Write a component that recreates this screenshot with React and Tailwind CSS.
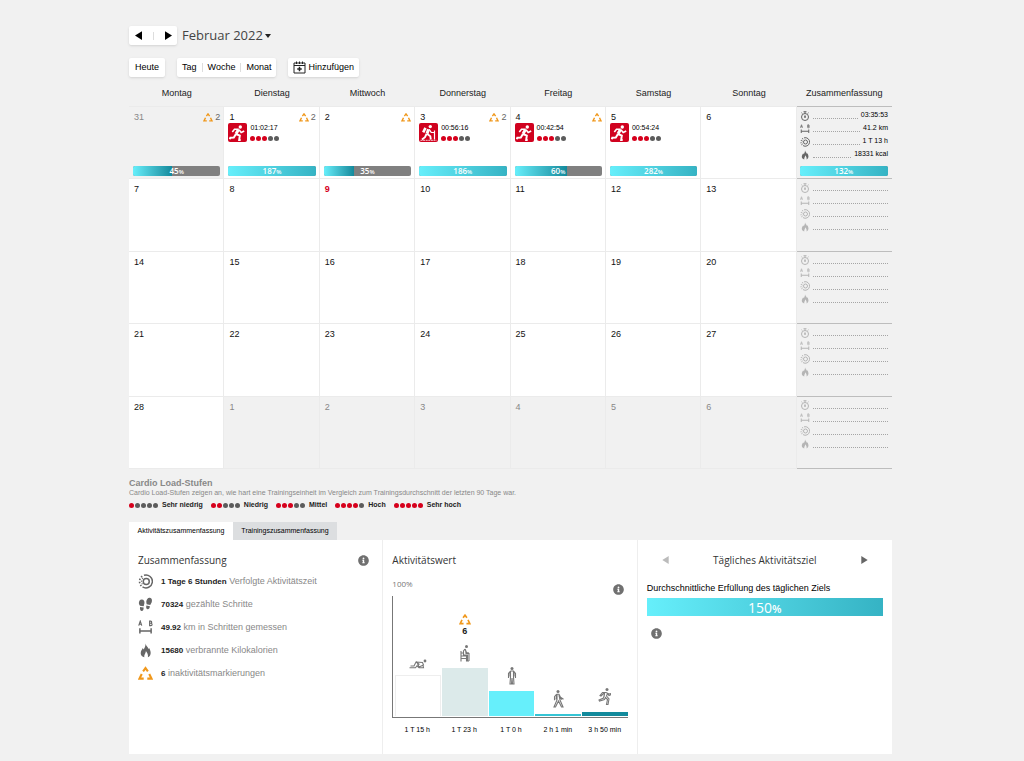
import { useState } from 'react';
import { FaInfoCircle } from 'react-icons/fa';

const weekdays = ['Montag', 'Dienstag', 'Mittwoch', 'Donnerstag', 'Freitag', 'Samstag', 'Sonntag'];

const firstWeek = [
    { day: 31, outside: true, marks: '2', percent: 45 },
    { day: 1, marks: '2', percent: 187, sport: 'run', time: '01:02:17' },
    { day: 2, marks: '', percent: 35 },
    { day: 3, marks: '2', percent: 186, sport: 'hike', time: '00:56:16' },
    { day: 4, marks: '', percent: 60, sport: 'run', time: '00:42:54' },
    { day: 5, percent: 282, sport: 'run', time: '00:54:24' },
    { day: 6 },
];

const makeWeek = (start) =>
    weekdays.map((_, i) => {
        const day = start + i;
        return day > 28 ? { day: day - 28, outside: true } : { day, today: day === 9 };
    });

const weeks = [firstWeek, makeWeek(7), makeWeek(14), makeWeek(21), makeWeek(28)];

const loadLevels = ['Sehr niedrig', 'Niedrig', 'Mittel', 'Hoch', 'Sehr hoch'];

const MarkIcon = ({ className }) => (
    <svg viewBox="0 0 20 18" className={className} fill="none" stroke="#f0981c" strokeWidth="2.8" aria-hidden="true">
        <path d="M6.8 6.2 10 1.8l3.2 4.4" />
        <path d="M5 9.6 2 15.8h5.6" />
        <path d="m15 9.6 3 6.2h-5.6" />
    </svg>
);

const StopwatchIcon = ({ className }) => (
    <svg viewBox="0 0 20 20" className={className} fill="none" stroke="currentColor" strokeWidth="2" aria-hidden="true">
        <circle cx="10" cy="12" r="7" />
        <path d="M10 1v4M7 1.5h6M15.2 5.2l1.8-1.7M3 3.5l1.8 1.7M10 8.5V12" />
        <circle cx="10" cy="12" r="1" fill="currentColor" />
    </svg>
);

const DistanceIcon = ({ className }) => (
    <svg viewBox="0 0 20 20" className={className} fill="none" stroke="currentColor" strokeWidth="1.5" aria-hidden="true">
        <path d="m1 7.5 2-6 2 6M1.7 5.6h2.6" />
        <path d="M15.5 1.5v6h1.7a1.6 1.6 0 0 0 0-3.2h-1.7 1.4a1.4 1.4 0 0 0 0-2.8z" />
        <path d="M2.5 11v7M17.5 11v7M2.5 14.5h15" strokeWidth="2" />
    </svg>
);

const ActivityIcon = ({ className }) => (
    <svg viewBox="0 0 20 20" className={className} fill="none" stroke="currentColor" aria-hidden="true">
        <circle cx="11" cy="10" r="4" strokeWidth="2" />
        <path d="M8 1.7a8.6 8.6 0 1 1-2 15.5" strokeWidth="2" />
        <path d="M4.5 16A8.6 8.6 0 0 1 6.5 2.5" strokeWidth="2.2" strokeDasharray="2 2.2" />
        <path d="M5.8 13.6a6.2 6.2 0 0 1 1-8.3" strokeWidth="1.4" strokeDasharray="1.5 2" />
    </svg>
);

const FlameIcon = ({ className }) => (
    <svg viewBox="0 0 20 20" className={className} fill="currentColor" aria-hidden="true">
        <path d="M10 .5c.3 3 3.300 4.500 4 7.500l.8-1.5c1.6 2.7 2.4 5.2 2 7.7-.4 2.3-1.600 3.900-3.600 4.800.6-3-.6-6-2.700-8.500.1 3-2.700 4.500-2 8.500C5.800 18.200 3.600 16.500 3.600 13.500c0-3 2-4.500 2.700-6.800l1.200 2C8.800 6.300 10.200 4 10 .5z" />
    </svg>
);

const StepsIcon = ({ className }) => (
    <svg viewBox="0 0 20 20" className={className} fill="currentColor" aria-hidden="true">
        <path d="M1.3 9.2C.6 6 2.4 3.2 5 3.2c2.900 0 4 2.500 3.500 5.200L7.600 12.400l-5-.6z" />
        <path d="m2.7 13.400 4.800.6c.1 2.600-.6 4.800-2.500 4.800-2 0-2.700-2.600-2.300-5.400z" />
        <path d="M11 6.200c.3-3.200 2.400-5.700 4.900-5.200 2.500.4 3.300 3.200 2.400 6l-2 3.700-4.800-1z" />
        <path d="m11.200 11.200 4.700 1c-.3 2.600-1.500 4.400-3.300 4.100-1.800-.4-2-2.700-1.400-5.100z" />
    </svg>
);

const RunSportIcon = () => (
    <svg viewBox="0 0 19 19" className="size-full" fill="none" stroke="#fff" strokeWidth="1.6" aria-hidden="true">
        <circle cx="12.3" cy="4" r="1.7" fill="#fff" stroke="none" />
        <path d="M10.3 6.800 8 11" strokeWidth="3" />
        <path d="M10.800 6.300 6.500 6.200 4.300 9M11 6.800l2.200 2.700 3-1.500" />
        <path d="m8 11 3.800 1.700-.6 4.200h1.500M7.800 11.200l-2 3.300-3.500.2-.5 1.500" strokeWidth="2" />
    </svg>
);

const HikeSportIcon = () => (
    <svg viewBox="0 0 19 19" className="size-full" fill="none" stroke="#fff" strokeWidth="1.5" aria-hidden="true">
        <circle cx="11.3" cy="3.6" r="1.7" fill="#fff" stroke="none" />
        <path d="M9.500 6.300 8 10.800" strokeWidth="3" />
        <path d="M6.500 4.800 4.200 9.300" strokeWidth="2.6" />
        <path d="m10.200 6.300 2 3 2.800.2M15.500 7.500v9" strokeWidth="1.2" />
        <path d="m8 10.800 3.300 2.400.5 3.300M7.500 11l-1.500 3.200-3 2.300" strokeWidth="1.9" />
        <path d="M1.500 17.300h16" strokeWidth=".8" strokeDasharray="2 .6" />
    </svg>
);

const CalendarPlusIcon = () => (
    <svg viewBox="0 0 26 26" className="size-[13px]" fill="none" stroke="#222" strokeWidth="2" aria-hidden="true">
        <path d="M2 4h22v20H2zM2 9h22" />
        <path d="M7 1v5M13 1v5M19 1v5" />
        <path d="M13 11.500v9M8.500 16h9" strokeWidth="3" />
    </svg>
);

const LyingIcon = () => (
    <svg viewBox="0 0 36 20" className="h-[10px] w-[18px]" fill="none" stroke="#777" strokeWidth="2.2" aria-hidden="true">
        <circle cx="32" cy="4" r="2.8" fill="#777" stroke="none" />
        <path d="M1 17.500h12l3-4 4 4h9l-1-5M3 14h7l4-8 13 1 2 5-9 4-3-7M14 6l7 5" />
    </svg>
);

const SittingIcon = () => (
    <svg viewBox="0 0 20 34" className="h-[17px] w-[10px]" fill="none" stroke="#777" strokeWidth="2.2" aria-hidden="true">
        <circle cx="13" cy="3" r="3" fill="#777" stroke="none" />
        <path d="m10 8-3 4v8h8v12h3M10 8l3 7 5 1M11 9l1 8h6v15M2 12v21M2 22h11v11M2 27h11M2 16h4" />
    </svg>
);

const StandingIcon = () => (
    <svg viewBox="0 0 20 36" className="h-[18px] w-[10px]" fill="none" stroke="#777" strokeWidth="2.2" aria-hidden="true">
        <circle cx="10" cy="3" r="3" fill="#777" stroke="none" />
        <path d="M7 8h6l4 5v9M7 8l-4 5v9M7 9v11l-1 14h3l1-12 1 12h3l-1-14V9M6 11v8M14 11v8" />
    </svg>
);

const WalkingIcon = () => (
    <svg viewBox="0 0 22 36" className="h-[18px] w-[11px]" fill="none" stroke="#777" strokeWidth="2.2" aria-hidden="true">
        <circle cx="10" cy="3" r="3" fill="#777" stroke="none" />
        <path d="M7 8.500h5l3 6 6 4M7 8.500l-4 5v7M8 9v11L2 34h3l6-12 6 12h3l-6-14-2-10M7 11l-1 8M12 12l2 4 4 3" />
    </svg>
);

const RunningIcon = () => (
    <svg viewBox="0 0 26 36" className="h-[18px] w-[13px]" fill="none" stroke="#777" strokeWidth="2.2" aria-hidden="true">
        <circle cx="18" cy="3" r="3" fill="#777" stroke="none" />
        <path d="M16 9H9l-5 6 2 1 5-5h2l-2 9-9 4 1 2 10-3 2-4 4 4-2 10h3l2-11-5-6 2-5 3 4 5-2-1-2-4 1zM13 12l-1 6" />
    </svg>
);

const Dots = ({ level }) => (
    <span className="flex gap-px">
        {[1, 2, 3, 4, 5].map((n) => (
            <span key={n} className={`size-[5px] rounded-full ${n <= level ? 'bg-[#d6001c]' : 'bg-[#5c5c5c]'}`} />
        ))}
    </span>
);

const PercentBar = ({ value }) => (
    <div className="relative h-[10px] overflow-hidden rounded-[2px] bg-[#808080] text-center font-['Open_Sans',sans-serif] text-[8px] leading-[10px] font-semibold text-white">
        <div
            className={`absolute inset-y-0 left-0 bg-linear-to-r from-[#66effb] ${value < 100 ? 'to-[#128a9c]' : 'to-[#35b3c4]'}`}
            style={{ width: `${Math.min(value, 100)}%` }}
        />
        <span className="relative">
            {value}
            <span className="text-[6px]">%</span>
        </span>
    </div>
);

const DayCell = ({ data }) => (
    <td className={`border-r border-b border-[#ebebeb] p-0 align-top ${data.outside ? 'bg-[#f1f1f1]' : 'bg-white'}`}>
        <div className="flex h-[70px] flex-col pt-1 pr-[3px] pb-px pl-1">
            <div className="flex items-center justify-between pl-px text-[9px] leading-3">
                <span className={data.today ? 'font-bold text-[#d6001c]' : data.outside ? 'text-[#888]' : 'text-[#111]'}>
                    {data.day}
                </span>
                {data.marks !== undefined && (
                    <span className="flex items-center gap-0.5 text-[#666]">
                        <MarkIcon className="h-[9px] w-[10px]" />
                        {data.marks}
                    </span>
                )}
            </div>
            {data.sport && (
                <div className="flex gap-[3px]">
                    <span className="size-[19px] rounded-[2px] bg-[#d0021f]">
                        {data.sport === 'run' ? <RunSportIcon /> : <HikeSportIcon />}
                    </span>
                    <span className="flex flex-col gap-[3px] text-[7px] leading-[10px] text-black">
                        {data.time}
                        <Dots level={3} />
                    </span>
                </div>
            )}
            {data.percent && (
                <div className="mt-auto">
                    <PercentBar value={data.percent} />
                </div>
            )}
        </div>
    </td>
);

const summaryIcons = [StopwatchIcon, DistanceIcon, ActivityIcon, FlameIcon];

const SummaryCell = ({ values, percent }) => (
    <td className="border-b border-[#bdbdbd] p-0 align-top">
        <div className="flex h-[70px] flex-col pt-0.5 pr-1 pb-px pl-[3px]">
            {summaryIcons.map((Icon, i) => (
                <div key={i} className="flex h-[13px] items-center gap-[3px] text-[7px] text-black">
                    <Icon className={`size-[10px] shrink-0 ${values ? 'text-[#666]' : 'text-[#b5b5b5]'}`} />
                    <span className="mt-1.5 grow border-b border-dotted border-[#a5a5a5]" />
                    {values && <span>{values[i]}</span>}
                </div>
            ))}
            {percent && (
                <div className="mt-auto">
                    <PercentBar value={percent} />
                </div>
            )}
        </div>
    </td>
);

const Triangle = ({ left, className }) => (
    <svg viewBox="0 0 8 10" className={className} fill="currentColor" aria-hidden="true">
        <path d={left ? 'M8 0v10L0 5z' : 'M0 0v10l8-5z'} />
    </svg>
);

const InfoButton = () => (
    <button type="button" aria-label="Info" className="block text-[#707070]">
        <FaInfoCircle size={11} />
    </button>
);

const totals = [
    { icon: ActivityIcon, value: '1 Tage 6 Stunden', label: 'Verfolgte Aktivitätszeit' },
    { icon: StepsIcon, value: '70324', label: 'gezählte Schritte' },
    { icon: DistanceIcon, value: '49.92', label: 'km in Schritten gemessen' },
    { icon: FlameIcon, value: '15680', label: 'verbrannte Kilokalorien' },
    { icon: MarkIcon, value: '6', label: 'inaktivitätsmarkierungen' },
];

const chart = [
    { label: '1 T 15 h', height: 41, color: 'border border-b-0 border-[#eee] bg-white', icon: LyingIcon },
    { label: '1 T 23 h', height: 48, color: 'bg-[#dceaea]', icon: SittingIcon, marks: 6 },
    { label: '1 T 0 h', height: 25, color: 'bg-[#66effb]', icon: StandingIcon },
    { label: '2 h 1 min', height: 2, color: 'bg-[#35c4d4]', icon: WalkingIcon },
    { label: '3 h 50 min', height: 4, color: 'bg-[#128a9c]', icon: RunningIcon },
];

const panelTitle = "font-['Open_Sans',sans-serif] text-[10px] leading-4 text-[#333]";
const toolButton = 'flex h-[19px] items-center rounded-[2px] bg-white text-black shadow-sm';

const App = () => {
    const [tab, setTab] = useState('activity');

    const tabClass = (name) =>
        `h-[18px] w-[104px] text-center text-[7px] text-black ${tab === name ? 'bg-white' : 'bg-[#dcdee0]'}`;

    return (
        <div className="min-h-screen bg-[#f1f1f1] pt-[26px] pr-[3px] pb-[7px] font-['Liberation_Sans',Arial,sans-serif] text-[9px] text-[#222]">
            <main className="mx-auto max-w-[763px]">
                <div className="flex items-center gap-[5px]">
                    <div className="flex h-[19px] w-12 items-center justify-around rounded-[2px] bg-white shadow-sm">
                        <button type="button" aria-label="Vorheriger Monat">
                            <Triangle left className="h-[9px] w-[7px] text-black" />
                        </button>
                        <span className="h-2 w-px bg-[#ddd]" />
                        <button type="button" aria-label="Nächster Monat">
                            <Triangle className="h-[9px] w-[7px] text-black" />
                        </button>
                    </div>
                    <button type="button" className="flex items-center gap-0.5 font-['Open_Sans',sans-serif] text-[13px] leading-[19px] text-[#444]">
                        Februar 2022
                        <svg viewBox="0 0 6 4" className="h-1 w-1.5" aria-hidden="true">
                            <path d="M0 0h6L3 4z" fill="#222" />
                        </svg>
                    </button>
                </div>

                <div className="mt-[13px] flex gap-3">
                    <button type="button" className={`${toolButton} px-[6px]`}>Heute</button>
                    <div className={`${toolButton} px-[5px]`}>
                        <button type="button" className="pr-[5px]">Tag</button>
                        <button type="button" className="border-x border-[#ddd] px-[5px] leading-[9px]">Woche</button>
                        <button type="button" className="pl-[5px]">Monat</button>
                    </div>
                    <button type="button" className={`${toolButton} gap-0.5 px-[5px]`}>
                        <CalendarPlusIcon />
                        Hinzufügen
                    </button>
                </div>

                <table className="mt-[9px] h-[383px] w-full table-fixed border-separate border-spacing-0">
                    <thead>
                        <tr>
                            {weekdays.map((name) => (
                                <th key={name} className="h-[21px] border-b border-[#ebebeb] p-0 pt-px align-top leading-3 font-normal">{name}</th>
                            ))}
                            <th className="h-[21px] border-b border-[#bdbdbd] p-0 pt-px align-top leading-3 font-normal">Zusammenfassung</th>
                        </tr>
                    </thead>
                    <tbody>
                        {weeks.map((week, i) => (
                            <tr key={i}>
                                {week.map((data, j) => (
                                    <DayCell key={j} data={data} />
                                ))}
                                {i === 0 ? (
                                    <SummaryCell values={['03:35:53', '41.2 km', '1 T 13 h', '18331 kcal']} percent={132} />
                                ) : (
                                    <SummaryCell />
                                )}
                            </tr>
                        ))}
                    </tbody>
                </table>

                <section className="mt-[9px]">
                    <h2 className="text-[9px] leading-[10px] font-bold text-[#888]">Cardio Load-Stufen</h2>
                    <p className="text-[7px] leading-[9px] text-[#888]">
                        Cardio Load-Stufen zeigen an, wie hart eine Trainingseinheit im Vergleich zum Trainingsdurchschnitt der letzten 90 Tage war.
                    </p>
                    <ul className="mt-[3px] flex gap-2">
                        {loadLevels.map((name, i) => (
                            <li key={name} className="flex items-center gap-1 text-[7px] leading-[10px] font-bold">
                                <Dots level={i + 1} />
                                {name}
                            </li>
                        ))}
                    </ul>
                </section>

                <div role="tablist" className="mt-3 flex">
                    <button type="button" role="tab" aria-selected={tab === 'activity'} onClick={() => setTab('activity')} className={tabClass('activity')}>
                        Aktivitätszusammenfassung
                    </button>
                    <button type="button" role="tab" aria-selected={tab === 'training'} onClick={() => setTab('training')} className={tabClass('training')}>
                        Trainingszusammenfassung
                    </button>
                </div>

                <div className="grid min-h-[214px] grid-cols-3 divide-x divide-[#eee] bg-white">
                    <section className="px-[9px] pt-3">
                        <div className="flex items-center justify-between pr-1">
                            <h3 className={panelTitle}>Zusammenfassung</h3>
                            <InfoButton />
                        </div>
                        <ul className="mt-0.5">
                            {totals.map(({ icon: Icon, value, label }) => (
                                <li key={label} className="flex h-[23px] items-center gap-2 text-[#888]">
                                    <Icon className="size-[15px] shrink-0 text-[#666]" />
                                    <span>
                                        <strong className="text-[8px] text-[#222]">{value}</strong> {label}
                                    </span>
                                </li>
                            ))}
                        </ul>
                    </section>

                    <section className="px-[9px] pt-3">
                        <h3 className={panelTitle}>Aktivitätswert</h3>
                        <div className="mt-[10px] flex h-[18px] items-start justify-between pr-1">
                            <span className="font-['Open_Sans',sans-serif] text-[8px] leading-3 text-[#777]">100%</span>
                            <span className="pt-1.5"><InfoButton /></span>
                        </div>
                        <div className="flex h-[122px] items-end gap-px border-b border-l border-[#777] pb-px pl-0.5">
                            {chart.map(({ label, height, color, icon: Icon, marks }) => (
                                <div key={label} className="flex grow basis-0 flex-col items-center">
                                    {marks && (
                                        <span className="mb-2 flex flex-col items-center gap-px text-[9px] leading-[11px] font-bold">
                                            <MarkIcon className="h-[11px] w-[12px]" />
                                            {marks}
                                        </span>
                                    )}
                                    <Icon />
                                    <div className={`mt-[6px] w-full ${color}`} style={{ height }} />
                                </div>
                            ))}
                        </div>
                        <div className="mt-[7px] flex gap-px pl-0.5">
                            {chart.map(({ label }) => (
                                <span key={label} className="grow basis-0 text-center text-[7px] leading-[10px] text-black">{label}</span>
                            ))}
                        </div>
                    </section>

                    <section className="px-[9px] pt-3">
                        <div className="flex items-center justify-between px-[15px]">
                            <button type="button" aria-label="Vorheriger Tag" className="text-[#bbb]">
                                <Triangle left className="h-[8px] w-[7px]" />
                            </button>
                            <h3 className={panelTitle}>Tägliches Aktivitätsziel</h3>
                            <button type="button" aria-label="Nächster Tag" className="text-[#666]">
                                <Triangle className="h-[8px] w-[7px]" />
                            </button>
                        </div>
                        <p className="mt-[14px] text-[9px] leading-3 text-black">Durchschnittliche Erfüllung des täglichen Ziels</p>
                        <div className="mt-1 h-[18px] bg-linear-to-r from-[#66effb] to-[#35b3c4] text-center font-['Open_Sans',sans-serif] text-[14px] leading-[19px] text-white">
                            150<span className="text-[11px] font-semibold">%</span>
                        </div>
                        <div className="mt-3 pl-1">
                            <InfoButton />
                        </div>
                    </section>
                </div>
            </main>
        </div>
    );
};

export default App;
